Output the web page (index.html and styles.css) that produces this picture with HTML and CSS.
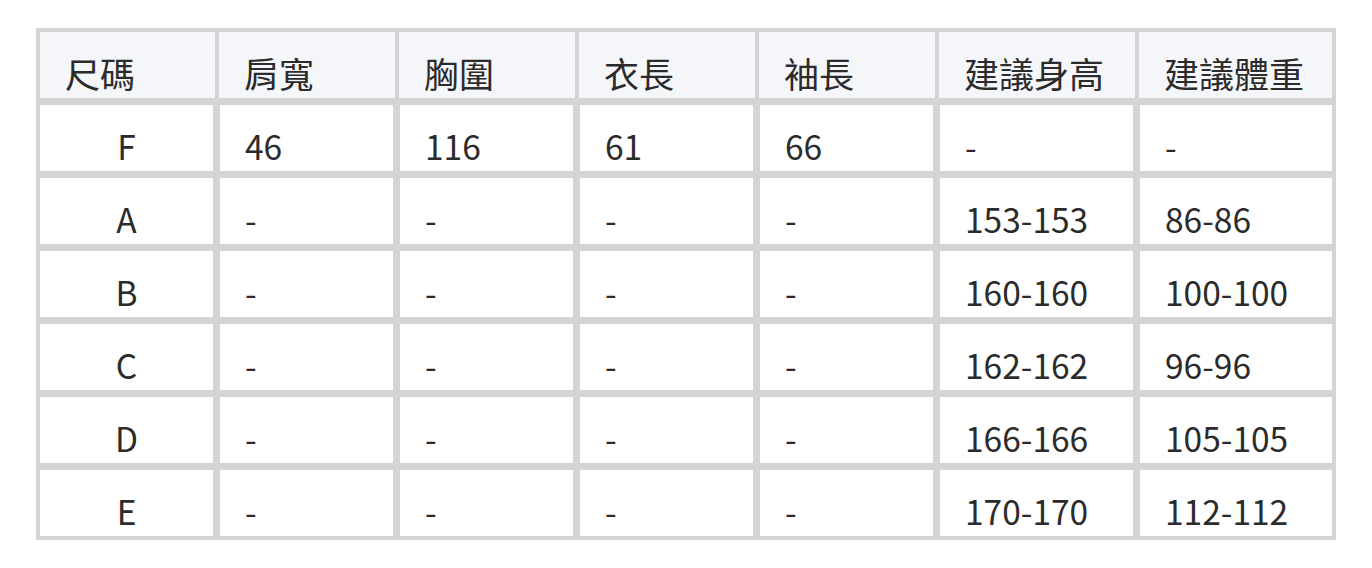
FILE: index.html
```html
<!DOCTYPE html>
<html lang="zh-Hant">
<head>
<meta charset="utf-8">
<title>尺碼表</title>
<link rel="stylesheet" href="styles.css">
</head>
<body>
<table class="size-table">
  <colgroup>
    <col class="c-size">
    <col class="c-std">
    <col class="c-std">
    <col class="c-std">
    <col class="c-std">
    <col class="c-wide">
    <col class="c-wide2">
  </colgroup>
  <thead>
    <tr>
      <th>尺碼</th>
      <th>肩寬</th>
      <th>胸圍</th>
      <th>衣長</th>
      <th>袖長</th>
      <th>建議身高</th>
      <th>建議體重</th>
    </tr>
  </thead>
  <tbody>
    <tr><td>F</td><td>46</td><td>116</td><td>61</td><td>66</td><td>-</td><td>-</td></tr>
    <tr><td>A</td><td>-</td><td>-</td><td>-</td><td>-</td><td>153-153</td><td>86-86</td></tr>
    <tr><td>B</td><td>-</td><td>-</td><td>-</td><td>-</td><td>160-160</td><td>100-100</td></tr>
    <tr><td>C</td><td>-</td><td>-</td><td>-</td><td>-</td><td>162-162</td><td>96-96</td></tr>
    <tr><td>D</td><td>-</td><td>-</td><td>-</td><td>-</td><td>166-166</td><td>105-105</td></tr>
    <tr><td>E</td><td>-</td><td>-</td><td>-</td><td>-</td><td>170-170</td><td>112-112</td></tr>
  </tbody>
</table>
</body>
</html>
```

FILE: styles.css
```css
html, body {
  margin: 0;
  padding: 0;
  background: #ffffff;
}

body {
  padding: 28px 0 0 36px;
  font-family: "Noto Sans CJK TC", "Noto Sans", sans-serif;
  color: #2b2b2b;
}

.size-table {
  width: 1300px;
  table-layout: fixed;
  border-collapse: separate;
  border-spacing: 0;
  border: none;
  font-size: 33.5px;
}

.c-size { width: 181px; }
.c-std { width: 180px; }
.c-wide { width: 200px; }
.c-wide2 { width: 199px; }

.size-table th,
.size-table td {
  box-sizing: content-box;
  height: 48px;
  line-height: 48px;
  padding: 17px 0 1px 25px;
  text-align: left;
  vertical-align: top;
  font-weight: 400;
  white-space: nowrap;
  border-style: solid;
  border-color: #d4d4d4;
}

.size-table th {
  background: #f5f6fa;
  border-width: 4px 2px 4px 2px;
  font-size: 35px;
}

.size-table th:first-child { border-left-width: 4px; }
.size-table th:last-child { border-right-width: 4px; }

.size-table td {
  background: #ffffff;
  border-width: 3px 4px 4px 3px;
}

.size-table td:first-child {
  border-left-width: 4px;
  text-align: center;
  padding-left: 0;
}

.size-table td:last-child { border-right-width: 4px; }
```
